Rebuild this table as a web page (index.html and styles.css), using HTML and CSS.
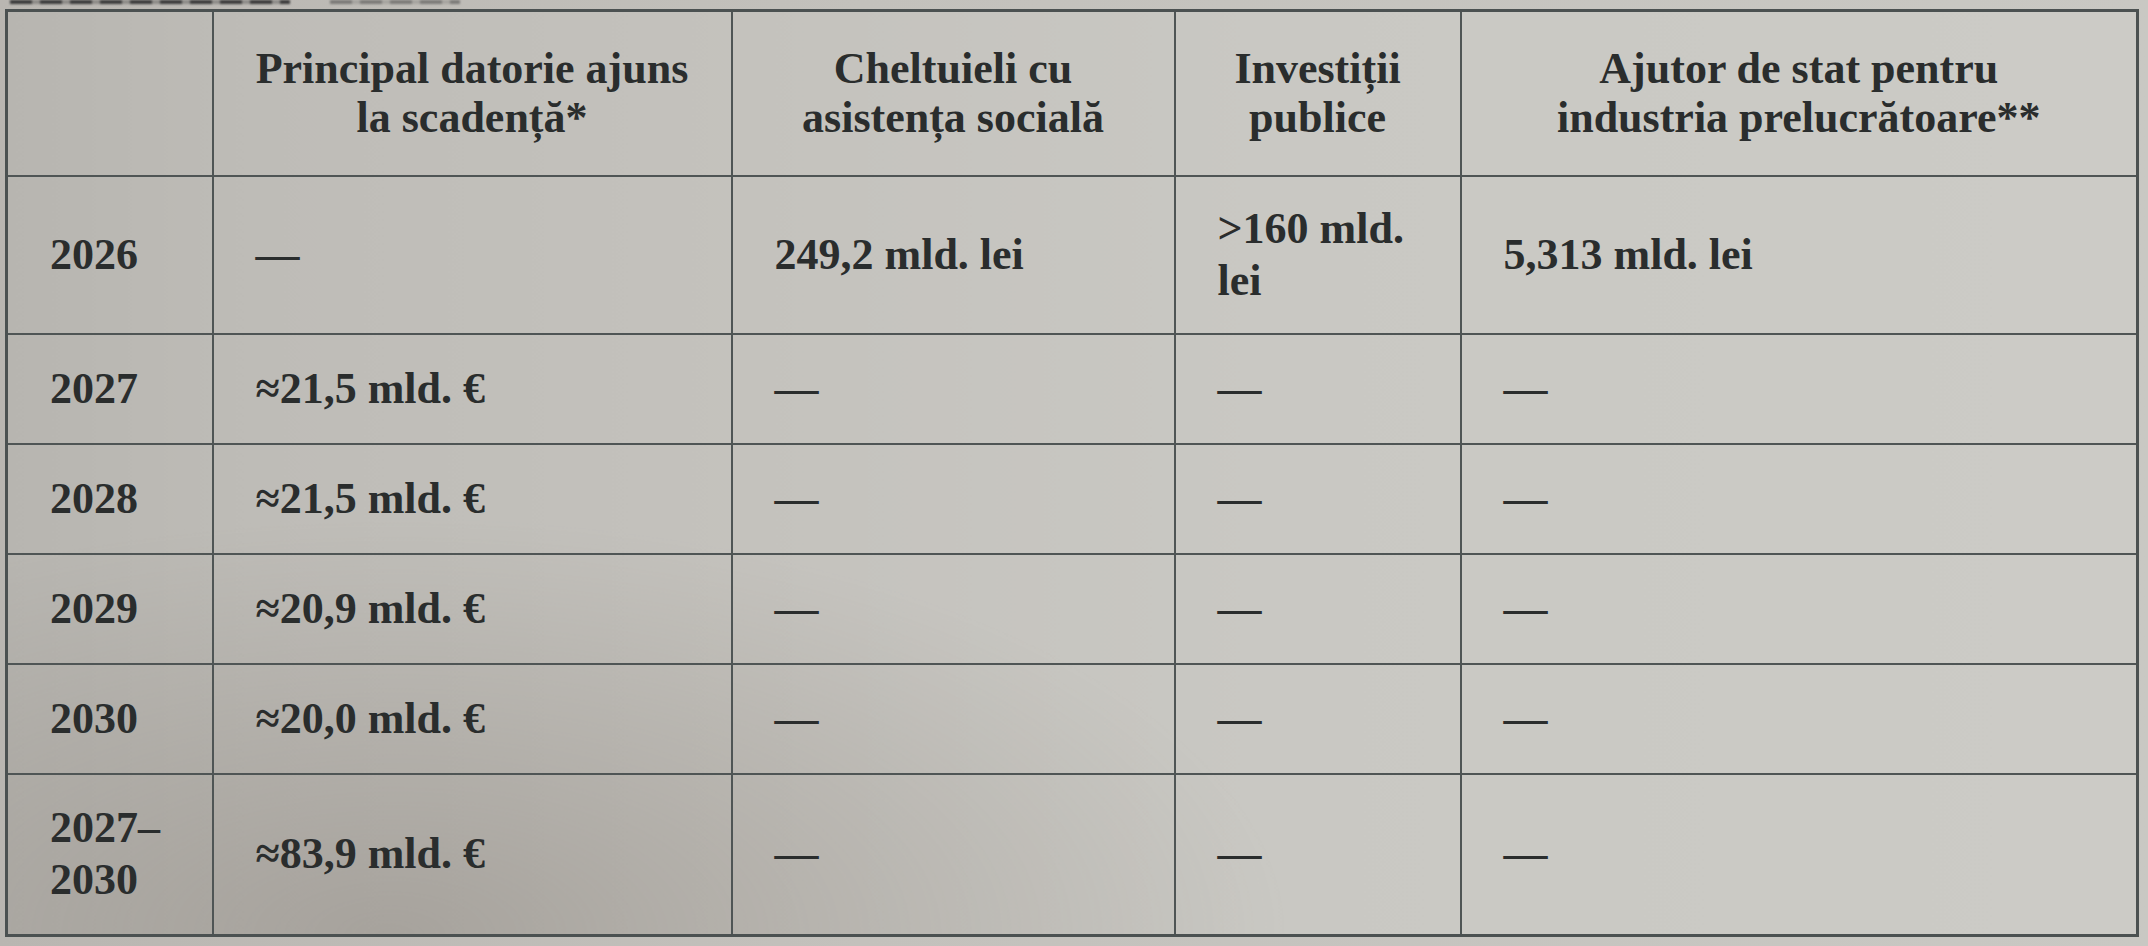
FILE: index.html
```html
<!DOCTYPE html>
<html lang="ro">
<head>
<meta charset="utf-8">
<title>Tabel</title>
<link rel="stylesheet" href="styles.css">
</head>
<body>
<div class="sheet">
  <div class="caption" aria-hidden="true">
    <span class="caption-mark caption-mark-a"></span>
    <span class="caption-mark caption-mark-b"></span>
  </div>
  <table class="data">
    <colgroup>
      <col class="c-year">
      <col class="c-debt">
      <col class="c-social">
      <col class="c-invest">
      <col class="c-aid">
    </colgroup>
    <tr class="r-head">
      <th></th>
      <th>Principal datorie ajuns<br>la scadență*</th>
      <th>Cheltuieli cu<br>asistența socială</th>
      <th>Investiții<br>publice</th>
      <th>Ajutor de stat pentru<br>industria prelucrătoare**</th>
    </tr>
    <tr class="r-tall">
      <td>2026</td>
      <td>—</td>
      <td>249,2 mld. lei</td>
      <td>&gt;160 mld.<br>lei</td>
      <td>5,313 mld. lei</td>
    </tr>
    <tr class="r-std">
      <td>2027</td>
      <td>≈21,5 mld. €</td>
      <td>—</td>
      <td>—</td>
      <td>—</td>
    </tr>
    <tr class="r-std">
      <td>2028</td>
      <td>≈21,5 mld. €</td>
      <td>—</td>
      <td>—</td>
      <td>—</td>
    </tr>
    <tr class="r-std">
      <td>2029</td>
      <td>≈20,9 mld. €</td>
      <td>—</td>
      <td>—</td>
      <td>—</td>
    </tr>
    <tr class="r-std">
      <td>2030</td>
      <td>≈20,0 mld. €</td>
      <td>—</td>
      <td>—</td>
      <td>—</td>
    </tr>
    <tr class="r-last">
      <td>2027–<br>2030</td>
      <td>≈83,9 mld. €</td>
      <td>—</td>
      <td>—</td>
      <td>—</td>
    </tr>
  </table>
</div>
</body>
</html>
```
FILE: styles.css
```css
html, body {
  margin: 0;
  padding: 0;
}
body {
  width: 2148px;
  height: 946px;
  overflow: hidden;
  background: linear-gradient(90deg, #b9b6b1 0%, #c3c1bc 40%, #c9c8c3 100%);
  font-family: "Liberation Serif", "Times New Roman", serif;
  color: #2a2d2d;
}
.sheet {
  display: flex;
  flex-direction: column;
}
.caption {
  height: 9px;
  display: flex;
  align-items: flex-start;
  gap: 40px;
  padding-left: 10px;
}
.caption-mark {
  display: block;
  height: 4px;
  background: repeating-linear-gradient(90deg, #3a3a3a 0 22px, rgba(58, 58, 58, 0.35) 22px 30px);
  filter: blur(0.8px);
}
.caption-mark-a {
  width: 280px;
}
.caption-mark-b {
  width: 130px;
  opacity: 0.5;
}
.data {
  margin-left: 5px;
  width: 2131px;
  table-layout: fixed;
  border-collapse: collapse;
  border: 3px solid #4b5151;
  background:
    radial-gradient(ellipse 900px 420px at 18% 100%, rgba(120, 112, 104, 0.35) 0%, rgba(120, 112, 104, 0) 100%),
    linear-gradient(90deg, #b7b5b0 0%, #bebcb7 12%, #c4c2bd 35%, #c9c8c3 60%, #cccbc6 100%);
}
.c-year { width: 206px; }
.c-debt { width: 519px; }
.c-social { width: 443px; }
.c-invest { width: 286px; }
.c-aid { width: 677px; }

.data th,
.data td {
  border: 2px solid #4f5555;
  font-size: 44px;
  line-height: 52px;
  font-weight: bold;
  padding: 0 40px 0 42px;
  vertical-align: middle;
}
.data th {
  text-align: center;
  white-space: nowrap;
  line-height: 49px;
  padding: 0 10px;
}
.data td {
  text-align: left;
}
.r-head { height: 165px; }
.r-tall { height: 158px; }
.r-std { height: 110px; }
.r-last { height: 162px; }
```
